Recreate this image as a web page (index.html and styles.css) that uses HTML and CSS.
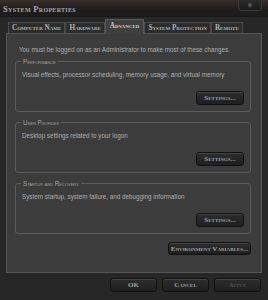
FILE: index.html
```html
<!DOCTYPE html>
<html lang="en">
<head>
  <meta charset="UTF-8">
  <title>System Properties</title>
  <link rel="stylesheet" href="styles.css">
</head>
<body>

<div class="window">
  <div class="titlebar">
    <span class="title">System Properties</span>
    <span class="close"><i></i></span>
  </div>

  <div class="tabs">
    <div class="tab">Computer Name</div>
    <div class="tab">Hardware</div>
    <div class="tab active">Advanced</div>
    <div class="tab">System Protection</div>
    <div class="tab">Remote</div>
  </div>

  <div class="panel">
    <p class="note">You must be logged on as an Administrator to make most of these changes.</p>

    <fieldset class="group">
      <legend>Performance</legend>
      <p>Visual effects, processor scheduling, memory usage, and virtual memory</p>
      <div class="group-actions"><button class="btn settings">Settings...</button></div>
    </fieldset>

    <fieldset class="group">
      <legend>User Profiles</legend>
      <p>Desktop settings related to your logon</p>
      <div class="group-actions"><button class="btn settings">Settings...</button></div>
    </fieldset>

    <fieldset class="group">
      <legend>Startup and Recovery</legend>
      <p>System startup, system failure, and debugging information</p>
      <div class="group-actions"><button class="btn settings">Settings...</button></div>
    </fieldset>

    <div class="env-row">
      <button class="btn env">Environment Variables...</button>
    </div>
  </div>

  <div class="footer">
    <button class="btn">OK</button>
    <button class="btn">Cancel</button>
    <button class="btn disabled">Apply</button>
  </div>
</div>

</body>
</html>
```

FILE: styles.css
```css
html, body { margin: 0; padding: 0; background: #262626; }
body { font-family: 'Liberation Sans', Arial, sans-serif; font-size: 6.3px; color: #b0b0b0; }

.window { width: 268px; height: 300px; background: #272727; display: flex; flex-direction: column; overflow: hidden; }

.titlebar {
  height: 16px;
  display: flex; justify-content: space-between; align-items: flex-start;
  background: linear-gradient(#3a2f2a, #1f1d1c 60%, #1d1d1d);
  border-bottom: 1px solid #161616;
}
.title {
  margin: 4px 0 0 3px;
  font-family: 'Liberation Serif', serif; font-weight: bold; font-variant: small-caps;
  font-size: 8.5px; letter-spacing: 0.3px; color: #a9a9a9;
}
.close {
  width: 22px; height: 10px; margin-right: 6px;
  background: linear-gradient(#2c2c2c, #1b1b1b);
  border: 1px solid #3a3a3a; border-top: none;
  border-radius: 0 0 4px 4px;
  display: flex; align-items: center; justify-content: center;
}
.close i { width: 4px; height: 4px; border-radius: 50%; background: #555; border: 1px solid #222; }

.tabs { display: flex; align-items: flex-end; padding-left: 8px; height: 16px; }
.tab {
  height: 10px; line-height: 10px; padding: 0 3px;
  background: #2c2c2c;
  border: 1px solid #4a4a4a; border-bottom: none;
  font-family: 'Liberation Serif', serif; font-weight: bold; font-variant: small-caps;
  font-size: 7.2px; color: #b0b0b0; white-space: nowrap;
}
.tab.active {
  height: 14px; line-height: 13px; padding: 0 4px;
  background: #3f3f3f; border-color: #5a5a5a; color: #d0d0d0;
  position: relative; top: 1px;
}

.panel {
  margin: 0 6px; height: 238px;
  background: #3c3c3c; border: 1px solid #555;
  padding: 0 10px 0 8px;
  display: flex; flex-direction: column;
}
.note { margin: 11px 0 0 4px; line-height: 10px; white-space: nowrap; }

.group {
  margin: 0; padding: 0 6px 6px;
  border: 1px solid #5c5c5c; border-radius: 3px;
}
.group:first-of-type { margin-top: 2px; }
.group + .group { margin-top: 6px; }
.group legend {
  padding: 0 2px; margin-left: -1px;
  font-size: 6.3px; font-variant: small-caps; color: #a2a2a2; line-height: 9px;
}
.group p { margin: 4px 0 0; line-height: 10px; white-space: nowrap; }
.group-actions { display: flex; justify-content: flex-end; margin-top: 11px; }
.settings { width: 48px; }

.btn {
  height: 14px; padding: 0;
  background: linear-gradient(#2d2d2d, #1f1f1f);
  border: 1px solid #111; border-radius: 3px;
  box-shadow: inset 0 1px 0 #444;
  font-family: 'Liberation Serif', serif; font-weight: bold; font-variant: small-caps;
  font-size: 7px; color: #a0a0a0;
}

.env-row { display: flex; justify-content: flex-end; margin-top: 8px; }
.env { width: 83px; height: 13px; }

.footer { display: flex; justify-content: flex-end; gap: 5px; padding: 5px 7px 0 0; }
.footer .btn { width: 47px; height: 14px; }
.footer .disabled { color: #4e4e4e; }
```
